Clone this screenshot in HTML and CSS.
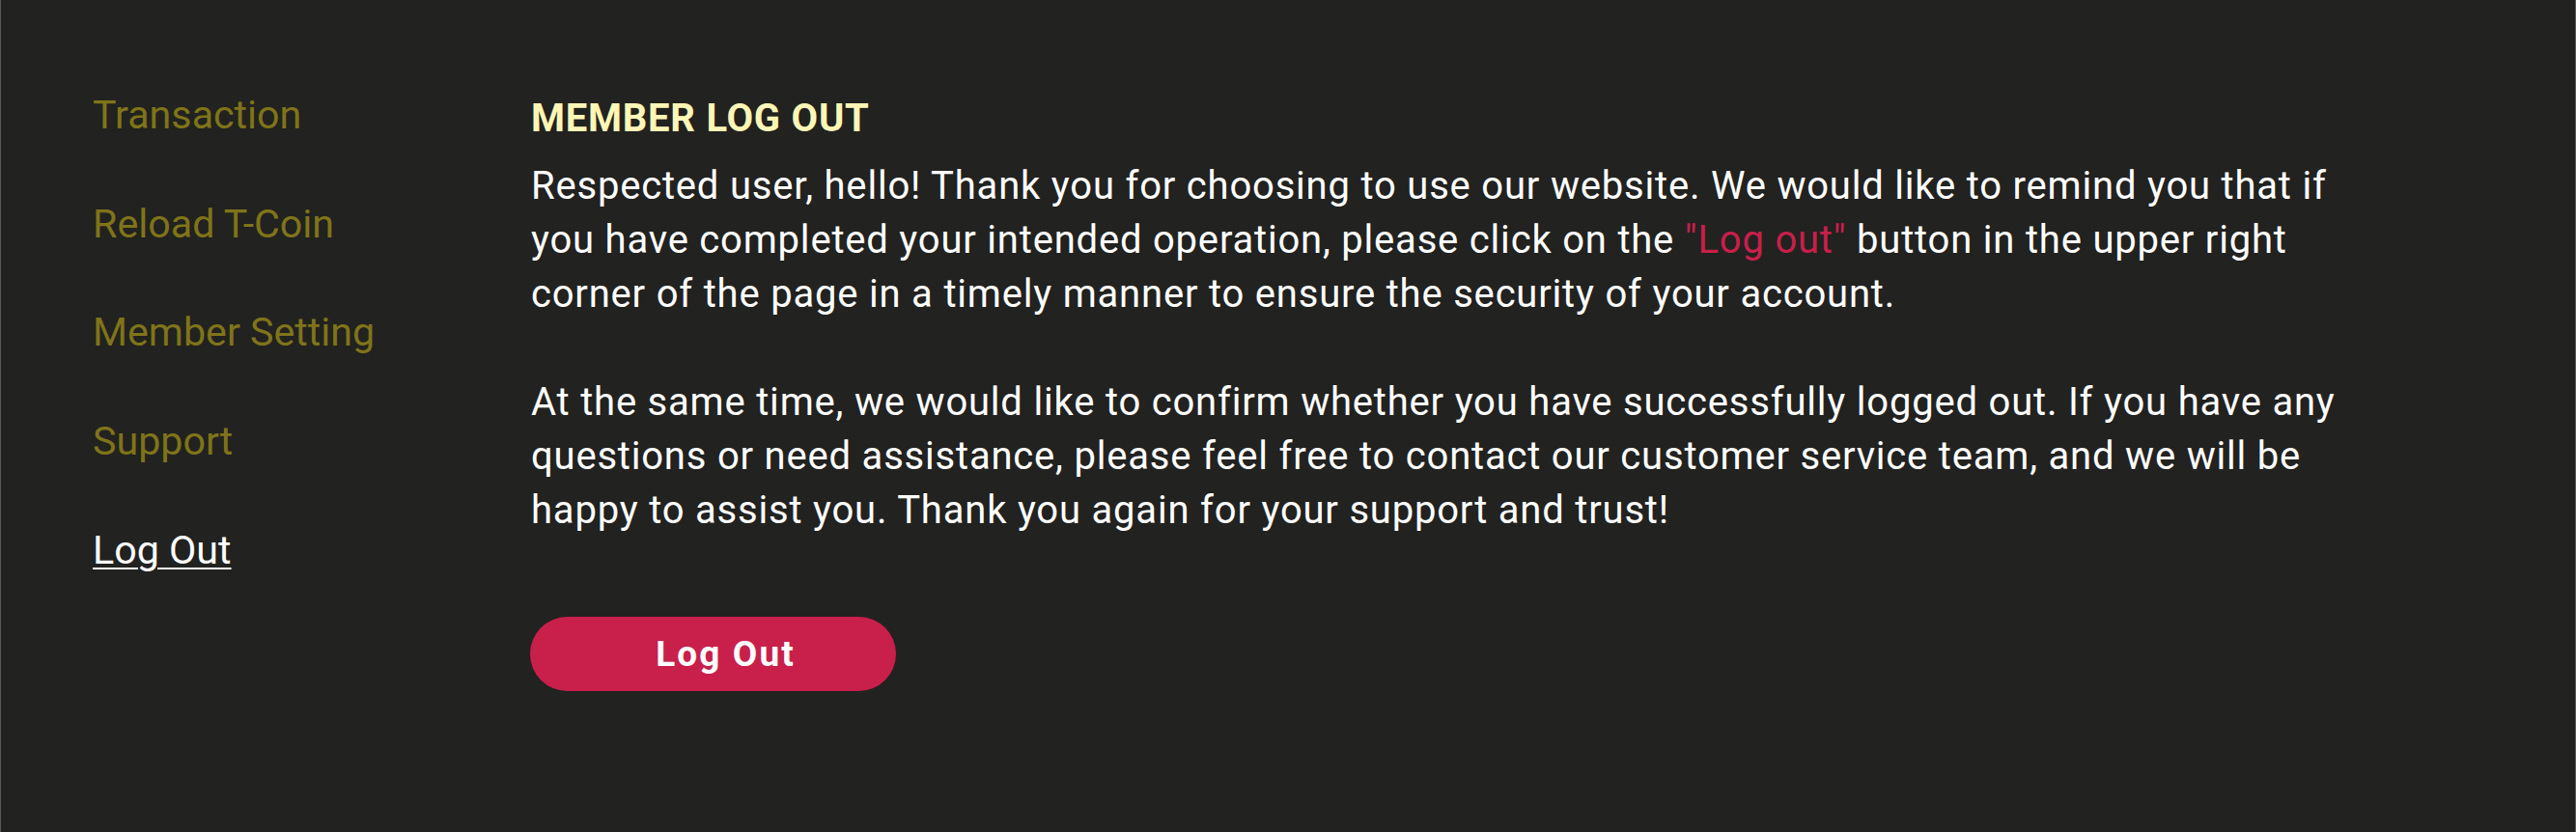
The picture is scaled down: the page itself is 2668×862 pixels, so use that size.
FILE: index.html
```html
<!DOCTYPE html>
<html lang="en">
<head>
<meta charset="utf-8">
<title>Member Log Out</title>
<link rel="stylesheet" href="styles.css">
</head>
<body>
<div class="page">
  <nav class="side-nav">
    <a class="nav-link" href="#">Transaction</a>
    <a class="nav-link" href="#">Reload T-Coin</a>
    <a class="nav-link" href="#">Member Setting</a>
    <a class="nav-link" href="#">Support</a>
    <a class="nav-link active" href="#">Log Out</a>
  </nav>
  <main class="content">
    <h1 class="title">MEMBER LOG OUT</h1>
    <p class="text">Respected user, hello! Thank you for choosing to use our website. We would like to remind you that if you have completed your intended operation, please click on the <span class="accent">"Log out"</span> button in the upper right corner of the page in a timely manner to ensure the security of your account.</p>
    <p class="text">At the same time, we would like to confirm whether you have successfully logged out. If you have any questions or need assistance, please feel free to contact our customer service team, and we will be happy to assist you. Thank you again for your support and trust!</p>
    <button class="logout-btn" type="button">Log Out</button>
  </main>
</div>
</body>
</html>
```
FILE: styles.css
```css
html, body {
  margin: 0;
  padding: 0;
  background: #222220;
}

body {
  font-family: Roboto, "Noto Sans", "Liberation Sans", sans-serif;
}

.page {
  box-sizing: border-box;
  height: 862px;
  border-left: 1px solid #595959;
  border-right: 1px solid #595959;
  background: #222220;
  display: flex;
  padding: 91px 0 0 95px;
}

.side-nav {
  width: 454px;
  flex: none;
  display: flex;
  flex-direction: column;
  align-items: flex-start;
  gap: 56.7px;
}

.nav-link {
  display: block;
  font-size: 41.2px;
  line-height: 56px;
  color: #7f7419;
  text-decoration: none;
}

.nav-link.active {
  color: #ffffff;
  text-decoration: underline;
  text-underline-offset: 4px;
  text-decoration-thickness: 2px;
}

.content {
  width: 1900px;
  padding-top: 4px;
}

.title {
  margin: 0 0 14px;
  font-size: 40px;
  line-height: 56px;
  font-weight: 700;
  letter-spacing: 0.75px;
  color: #fff6b6;
}

.text {
  margin: 0 0 56px;
  font-size: 40px;
  line-height: 56px;
  color: #ffffff;
  letter-spacing: 0.8px;
}

.accent {
  color: #c91f4b;
}

.logout-btn {
  display: block;
  margin: 82px 0 0 -1px;
  width: 379px;
  height: 77px;
  border: none;
  border-radius: 39px;
  background: #c91f4b;
  color: #ffffff;
  font-family: Roboto, "Noto Sans", "Liberation Sans", sans-serif;
  font-size: 37px;
  font-weight: 700;
  letter-spacing: 2.1px;
  padding: 0 0 0 26px;
  cursor: pointer;
}
```
